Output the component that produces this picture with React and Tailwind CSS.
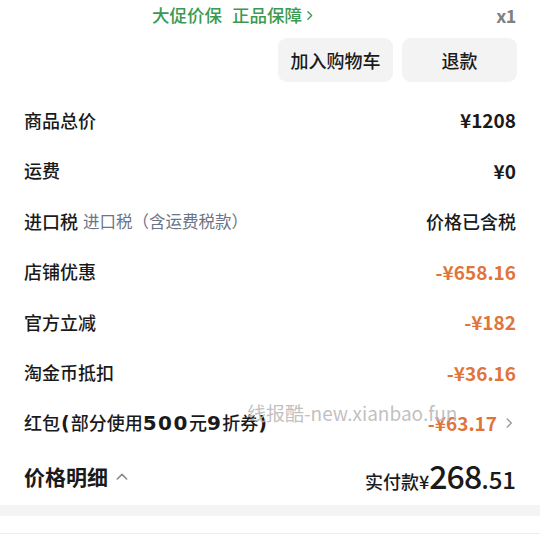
import React from 'react';

const rows = [
  { label: '商品总价', value: '¥1208' },
  { label: '运费', value: '¥0' },
  { label: '进口税', note: '进口税（含运费税款）', value: '价格已含税', plain: true },
  { label: '店铺优惠', value: '-¥658.16', discount: true },
  { label: '官方立减', value: '-¥182', discount: true },
  { label: '淘金币抵扣', value: '-¥36.16', discount: true },
];

const font = { fontFamily: '"Noto Sans CJK SC", "Noto Sans", sans-serif' };
const heavy = { fontFamily: '"DejaVu Sans", sans-serif' };

const Chevron = ({ dir = 'right', className }) => (
  <svg viewBox="0 0 12 12" className={className} fill="none" stroke="currentColor" strokeWidth="1.2" strokeLinecap="round" strokeLinejoin="round">
    {dir === 'right' ? <path d="M4.5 2.5 8 6l-3.5 3.5" /> : <path d="M2.5 7.5 6 4l3.5 3.5" />}
  </svg>
);

const App = () => {
  return (
    <div className="w-[540px] h-[540px] bg-white overflow-hidden text-[#1a1a1a]" style={font}>
      {/* Top badges */}
      <div className="h-[30px] px-6 flex items-center">
        <div className="flex-1 flex items-center ml-[128px] gap-[10px] text-[17.5px] text-[#3b9a4f] font-medium">
          <span>大促价保</span>
          <span className="flex items-center">
            正品保障
            <Chevron className="w-[13px] h-[13px] ml-[1px]" />
          </span>
        </div>
        <span className="text-[18px] font-bold text-[#808080] tracking-tight">x1</span>
      </div>

      {/* Actions */}
      <div className="mt-[8px] px-[23px] flex justify-end gap-[9px]">
        <button className="w-[115px] h-[44px] rounded-[9px] bg-[#f3f3f3] text-[18px] font-medium">加入购物车</button>
        <button className="w-[115px] h-[44px] rounded-[9px] bg-[#f3f3f3] text-[18px] font-medium">退款</button>
      </div>

      {/* Price rows */}
      <div className="mt-[13px] px-6">
        {rows.map((row) => (
          <div key={row.label} className="h-[50.5px] flex items-center justify-between">
            <div className="flex items-center gap-[5px] text-[18px] font-medium">
              <span>{row.label}</span>
              {row.note && <span className="text-[16.5px] font-normal text-[#6b7587]">{row.note}</span>}
            </div>
            <span
              className={
                row.discount
                  ? 'text-[19px] font-semibold text-[#e0743a]'
                  : row.plain
                  ? 'text-[18px] font-medium'
                  : 'text-[19px] font-semibold'
              }
            >
              {row.value}
            </span>
          </div>
        ))}

        {/* Red packet row with watermark */}
        <div className="relative h-[50.5px] flex items-center justify-between">
          <div className="flex items-baseline text-[18px] font-medium">
            红包
            <span className="text-[19px] font-bold mx-[1px]" style={heavy}>(</span>
            部分使用
            <span className="text-[20px] font-bold tracking-[1.5px]" style={heavy}>500</span>
            元
            <span className="text-[20px] font-bold tracking-[1.5px]" style={heavy}>9</span>
            折券
            <span className="text-[19px] font-bold" style={heavy}>)</span>
          </div>
          <div className="flex items-center gap-[5px]">
            <span className="text-[19px] font-semibold text-[#e0743a]">-¥63.17</span>
            <Chevron className="w-[14px] h-[14px] text-[#9a9a9a]" />
          </div>
          <span className="absolute left-[223px] top-[1px] text-[19px] text-[#b9b9b9]/90 whitespace-nowrap pointer-events-none">
            线报酷-new.xianbao.fun
          </span>
        </div>

        {/* Total */}
        <div className="h-[56px] flex items-center justify-between">
          <div className="flex items-center gap-[6px]">
            <span className="text-[21px] font-semibold">价格明细</span>
            <Chevron dir="up" className="w-[16px] h-[16px] text-[#8a8a8a]" />
          </div>
          <div className="flex items-baseline">
            <span className="text-[18px] font-medium">实付款¥</span>
            <span className="text-[32px] font-medium leading-none tracking-tight">268</span>
            <span className="text-[24px] font-medium leading-none">.51</span>
          </div>
        </div>
      </div>

      <div className="h-[11px] bg-[#f4f4f4]" />
      <div className="h-[17px]" />
      <div className="h-px bg-[#ececec]" />
    </div>
  );
};

export default App;
